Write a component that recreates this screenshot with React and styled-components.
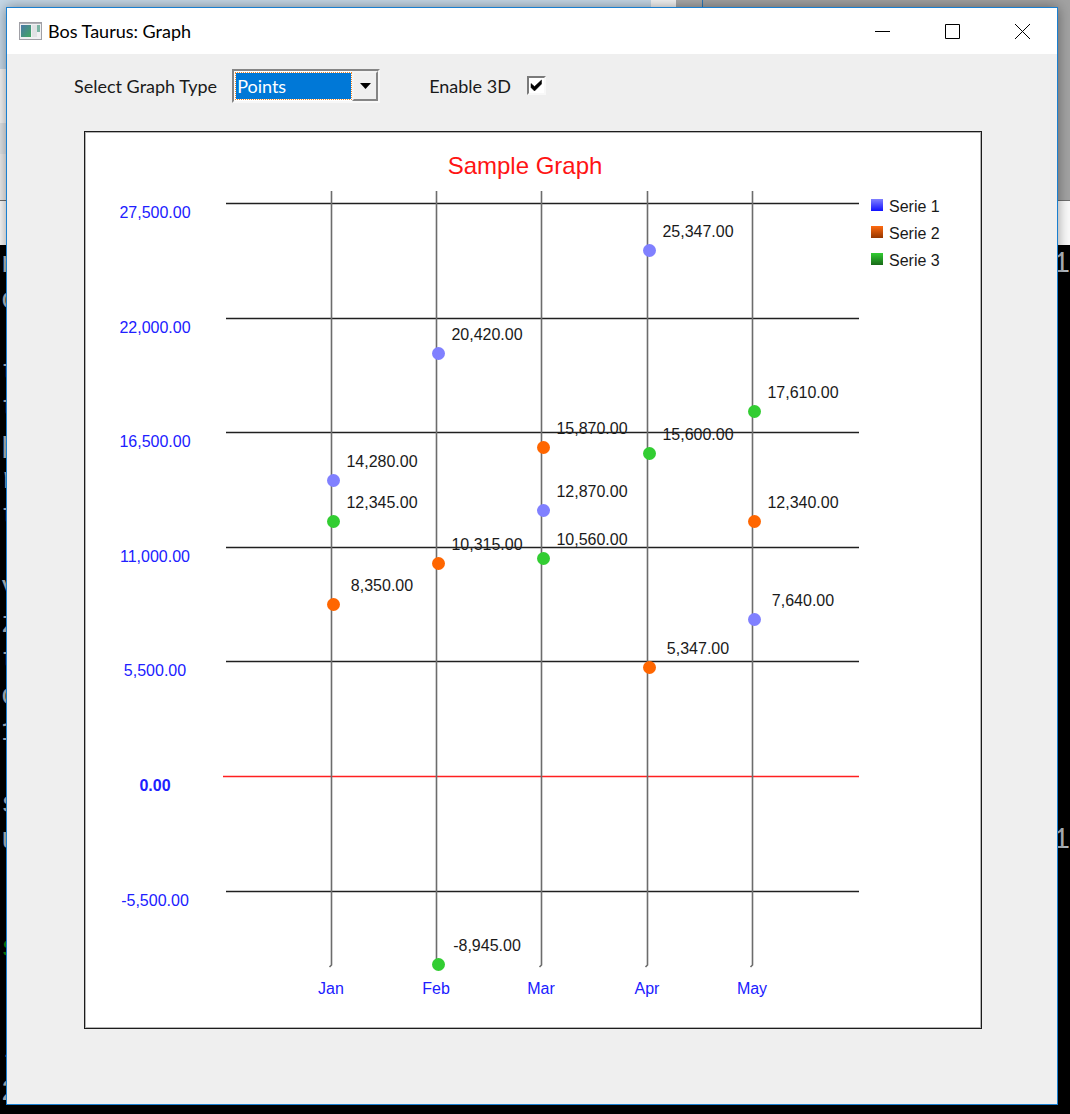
import React, { useState } from "react";
import styled, { createGlobalStyle } from "styled-components";

const GlobalStyle = createGlobalStyle`
  body {
    margin: 0;
    background: #000;
  }

  * {
    box-sizing: border-box;
  }
`

/********** ---DESKTOP--- **********/
const Desktop = styled.div`
  position: relative;
  min-height: 100vh;
  padding: 7px 12px 9px 6px;
  overflow: hidden;
  font-family: "Lato", "Open Sans", sans-serif;
  font-size: 18px;
  color: #1a1a1a;
`

const Backdrop = styled.div`
  position: absolute;
  inset: 0;
  display: flex;
  flex-direction: column;
  overflow: hidden;
`

const BackWindows = styled.div`
  display: flex;
  height: 200px;
  background: #a2a2a2;
`

const BackWindow = styled.div`
  display: flex;
  width: 703px;
  border-right: 1px solid #2b78b8;
  background: #a9a9a9;
`

const BackPanel = styled.div`
  width: 651px;
  background: linear-gradient(#c6d8e7 0 69px, #f4f4f4 69px 123px, #dfe3e6 123px 154px, #ececec 154px);
`

const BackScroll = styled.div`
  width: 25px;
  background: #f4f4f4;
`

const BackTitle = styled.div`
  height: 45px;
  flex: none;
  border-top: 1px solid #6e6e6e;
  background: #fafafa;
`

const Console = styled.div`
  flex: 1;
  padding-top: 2px;
  background: #000;
  font-family: "Liberation Mono", monospace;
  font-size: 29px;
  line-height: 36px;
`

const ConsoleRow = styled.div`
  display: flex;
  justify-content: space-between;
  height: 36px;
  padding-left: 1px;
  color: ${props => props.$green ? "#0c8a0c" : "#b4bcc4"};
`

/********** ---WINDOW--- **********/
const Window = styled.main`
  position: relative;
  border: 1px solid #1a7fd0;
  background: #efefef;
  box-shadow: 0 0 12px rgba(0, 0, 0, 0.4);
`

const TitleBar = styled.header`
  display: flex;
  align-items: center;
  height: 46px;
  padding-left: 12px;
  background: #fff;
`

const Title = styled.h1`
  flex: 1;
  margin: 0 0 0 6px;
  font-size: 18px;
  font-weight: normal;
  line-height: 24px;
  color: #000;
`

const WindowButton = styled.button`
  display: flex;
  align-items: center;
  justify-content: center;
  width: 70px;
  height: 46px;
  padding: 0;
  border: none;
  background: none;
`

/********** ---TOOLBAR--- **********/
const Toolbar = styled.div`
  display: flex;
  align-items: center;
  height: 77px;
  padding: 0 0 14px 67px;
`

const FieldLabel = styled.label`
  line-height: 24px;
  white-space: nowrap;
`

const SelectBox = styled.div`
  position: relative;
  width: 148px;
  height: 34px;
  margin: 0 49px 0 15px;
  padding: 1px;
  border: 2px solid;
  border-color: #858585 #f8f8f8 #f8f8f8 #858585;
  background: #fff;
`

const GraphSelect = styled.select`
  appearance: none;
  display: block;
  width: 117px;
  height: 28px;
  padding: 0 1px;
  border: 1px dotted #f08828;
  border-radius: 0;
  outline: none;
  background: #0078d7 padding-box;
  background-color: #0078d7;
  color: #fff;
  font-family: inherit;
  font-size: 18px;
`

const DropArrow = styled.span`
  position: absolute;
  top: 0;
  right: 0;
  display: flex;
  align-items: center;
  justify-content: center;
  width: 26px;
  height: 30px;
  border: 2px solid;
  border-color: #f4f4f4 #858585 #858585 #f4f4f4;
  background: #f0f0f0;
  pointer-events: none;
`

const CheckBox = styled.div`
  position: relative;
  width: 19px;
  height: 19px;
  margin-left: 16px;
`

const CheckInput = styled.input`
  appearance: none;
  display: block;
  width: 19px;
  height: 19px;
  margin: 0;
  border: 2px solid;
  border-color: #7a7a7a #f8f8f8 #f8f8f8 #7a7a7a;
  background: #fff;
`

const CheckMark = styled.svg`
  position: absolute;
  top: 3px;
  left: 3px;
  pointer-events: none;
`

/********** ---GRAPH--- **********/
const GraphPanel = styled.section`
  margin: 0 75px 75px 77px;
  border: 1px solid #1c1c1c;
  background: #fff;
  box-shadow: inset 0 0 0 1px #b4b4b4;
`

const GraphSvg = styled.svg`
  display: block;
  width: 100%;
  height: auto;
  font-family: "Liberation Sans", Arial, sans-serif;
  font-size: 16px;
`

const GraphTitle = styled.text`
  font-size: 24px;
  fill: #ff1414;
  text-anchor: middle;
`

const AxisText = styled.text`
  fill: #2020ff;
  text-anchor: middle;
  font-weight: ${props => props.$bold ? "bold" : "normal"};
`

const ValueText = styled.text`
  fill: #1a1a1a;
  text-anchor: middle;
`

const LegendText = styled.text`
  fill: #1a1a1a;
`

const months = [
  { name: "Jan", x: 247 },
  { name: "Feb", x: 352 },
  { name: "Mar", x: 457 },
  { name: "Apr", x: 563 },
  { name: "May", x: 668 }
]

const series = [
  { name: "Serie 1", color: "#8080ff", light: "#8080ff", dark: "#1010ff", values: [14280, 20420, 12870, 25347, 7640] },
  { name: "Serie 2", color: "#ff6600", light: "#ff6a10", dark: "#943600", values: [8350, 10315, 15870, 5347, 12340] },
  { name: "Serie 3", color: "#32cd32", light: "#32cd32", dark: "#186818", values: [12345, -8945, 10560, 15600, 17610] }
]

const steps = [27500, 22000, 16500, 11000, 5500, 0, -5500]

// first letters of the console lines that stick out behind the window
const consoleLines = ["n", "c", "", "t", "t", "p", "r", "t", "", "v", "z", "t", "c", "1", "", "s", "u", "", "", "s", "", "", "-", "2"]

const zeroY = 644
const toY = (value) => Math.round(zeroY - value * 114.6 / 5500)

const formatValue = (value) => value.toLocaleString("en-US", { minimumFractionDigits: 2 })

function Graph() {
  return (
    <GraphPanel>
      <GraphSvg viewBox="0 0 896 896" role="img" aria-label="Sample Graph">
        <defs>
          {series.map((serie, i) => (
            <linearGradient key={serie.name} id={"serie" + i} x1="0" y1="0" x2="0" y2="1">
              <stop offset="0" stopColor={serie.light} />
              <stop offset="1" stopColor={serie.dark} />
            </linearGradient>
          ))}
        </defs>

        <GraphTitle x="440" y="42">Sample Graph</GraphTitle>

        {series.map((serie) => serie.values.map((value, i) => (
          <ValueText key={serie.name + i} x={months[i].x + 50} y={toY(value) - 11}>{formatValue(value)}</ValueText>
        )))}

        {steps.map((step) => (
          <g key={step}>
            <AxisText x="70" y={toY(step) + 15} $bold={step === 0}>{formatValue(step)}</AxisText>
            <path
              d={`M${step === 0 ? 138 : 141} ${toY(step) + 0.5}H774`}
              stroke={step === 0 ? "#ff2020" : "#202020"}
              strokeWidth="1.6"
            />
          </g>
        ))}

        {months.map((month) => (
          <g key={month.name}>
            <path d={`M${month.x - 0.5} 59V833l-2 2`} fill="none" stroke="#6c6c6c" strokeWidth="1.6" />
            <AxisText x={month.x - 1} y="862">{month.name}</AxisText>
          </g>
        ))}

        {series.map((serie) => serie.values.map((value, i) => (
          <circle key={serie.name + i} cx={months[i].x + 1.5} cy={toY(value) + 2.5} r="6.5" fill={serie.color} />
        )))}

        {series.map((serie, i) => (
          <g key={serie.name}>
            <rect x="786" y={67 + i * 27} width="12" height="12" fill={`url(#serie${i})`} />
            <LegendText x="804" y={80 + i * 27}>{serie.name}</LegendText>
          </g>
        ))}
      </GraphSvg>
    </GraphPanel>
  )
}

function App() {

  const [graphType, setGraphType] = useState("Points")
  const [enable3D, setEnable3D] = useState(true)

  const handleGraphType = (event) => {
    setGraphType(event.target.value)
  }

  const handleEnable3D = (event) => {
    setEnable3D(event.target.checked)
  }

  return (
    <Desktop>
      <GlobalStyle />

      <Backdrop aria-hidden="true">
        <BackWindows>
          <BackWindow>
            <BackPanel />
            <BackScroll />
          </BackWindow>
        </BackWindows>
        <BackTitle />
        <Console>
          {consoleLines.map((line, i) => (
            <ConsoleRow key={i} $green={i === 19}>
              <span>{line}</span>
              {(i === 0 || i === 16) && <span>1</span>}
            </ConsoleRow>
          ))}
        </Console>
      </Backdrop>

      <Window>
        <TitleBar>
          <svg width="23" height="18" viewBox="0 0 23 18">
            <defs>
              <linearGradient id="appIcon" x1="0" y1="0" x2="1" y2="1">
                <stop offset="0" stopColor="#4a78a8" />
                <stop offset="1" stopColor="#42a860" />
              </linearGradient>
            </defs>
            <rect x="0.5" y="0.5" width="22" height="17" fill="#f0f0f2" stroke="#a0a0a6" />
            <path d="M1 1.5H22" stroke="#b0b0b6" />
            <rect x="2" y="3" width="10" height="12" fill="url(#appIcon)" />
            <rect x="13" y="3" width="5" height="12" fill="#e0e2e4" />
            <rect x="18" y="3" width="3" height="7" fill="#7cb4a4" />
          </svg>
          <Title>Bos Taurus: Graph</Title>
          <WindowButton aria-label="Minimize">
            <svg width="15" height="15"><path d="M0 7.5H15" stroke="#000" /></svg>
          </WindowButton>
          <WindowButton aria-label="Maximize">
            <svg width="15" height="15"><path d="M0.5 0.5H14.5V14.5H0.5Z" fill="none" stroke="#000" /></svg>
          </WindowButton>
          <WindowButton aria-label="Close">
            <svg width="15" height="15"><path d="M0 0L15 15M15 0L0 15" stroke="#000" /></svg>
          </WindowButton>
        </TitleBar>

        <Toolbar>
          <FieldLabel htmlFor="graphType">Select Graph Type</FieldLabel>
          <SelectBox>
            <GraphSelect id="graphType" value={graphType} onChange={handleGraphType}>
              <option>Points</option>
              <option>Lines</option>
              <option>Bars</option>
            </GraphSelect>
            <DropArrow>
              <svg width="11" height="6"><path d="M0 0H11L5.5 6Z" fill="#000" /></svg>
            </DropArrow>
          </SelectBox>

          <FieldLabel htmlFor="enable3D">Enable 3D</FieldLabel>
          <CheckBox>
            <CheckInput id="enable3D" type="checkbox" checked={enable3D} onChange={handleEnable3D} />
            {enable3D && (
              <CheckMark width="13" height="13" viewBox="0 0 13 13">
                <path d="M1 4.500L4.500 7.500L11.500 1V5L4.500 12L1 8.500Z" fill="#000" stroke="#000" strokeWidth="0.5" />
              </CheckMark>
            )}
          </CheckBox>
        </Toolbar>

        <Graph />
      </Window>
    </Desktop>
  );
}

export default App;
